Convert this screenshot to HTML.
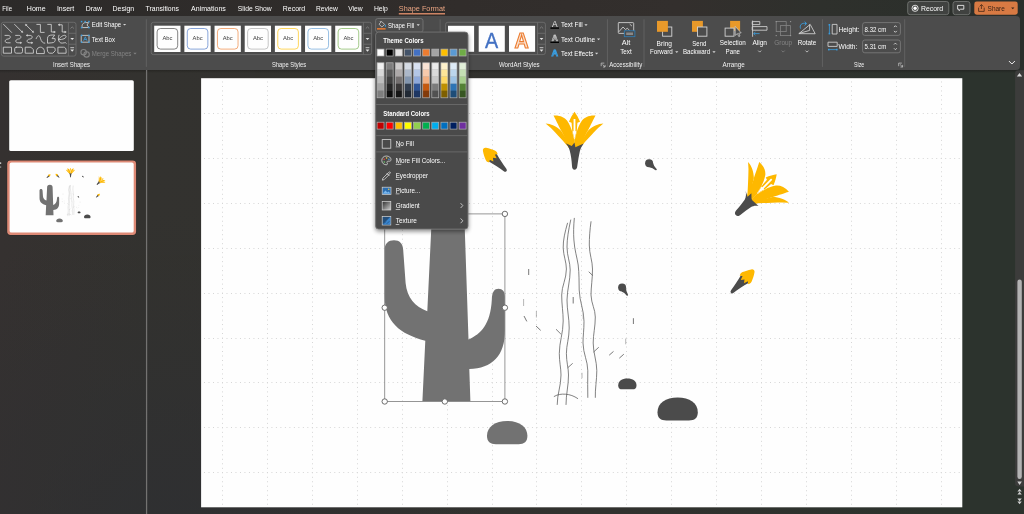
<!DOCTYPE html>
<html lang="en"><head><meta charset="utf-8"><title>PowerPoint - Shape Fill</title>
<style>html,body{margin:0;padding:0;background:#31312f;overflow:hidden}body{width:1024px;height:514px;position:relative}svg{display:block;position:absolute;left:0;top:0;font-family:"Liberation Sans", sans-serif}text{white-space:pre}svg{will-change:transform;opacity:0.999}</style></head><body>
<svg width="1024" height="514" viewBox="0 0 1024 514">
<defs>
<linearGradient id="bgTop" x1="0" y1="0" x2="1" y2="0"><stop offset="0" stop-color="#2c2a29"/><stop offset="0.45" stop-color="#322e2c"/><stop offset="0.66" stop-color="#34302e"/><stop offset="0.8" stop-color="#2f312d"/><stop offset="1" stop-color="#2b302c"/></linearGradient>
<linearGradient id="bgMain" x1="0" y1="0" x2="1" y2="0"><stop offset="0" stop-color="#363231"/><stop offset="0.14" stop-color="#34332f"/><stop offset="0.6" stop-color="#32322f"/><stop offset="0.93" stop-color="#2d342e"/><stop offset="1" stop-color="#2d342e"/></linearGradient>
<radialGradient id="bgCool" gradientUnits="userSpaceOnUse" cx="170" cy="540" r="330"><stop offset="0" stop-color="#2f3033" stop-opacity="0.9"/><stop offset="1" stop-color="#2f3033" stop-opacity="0"/></radialGradient>
<linearGradient id="ribSh" x1="0" y1="0" x2="0" y2="1"><stop offset="0" stop-color="#1c1b1a" stop-opacity="0.55"/><stop offset="1" stop-color="#1c1b1a" stop-opacity="0"/></linearGradient>
<filter id="sh" x="-20%" y="-10%" width="140%" height="125%"><feGaussianBlur in="SourceAlpha" stdDeviation="2.2"/><feOffset dx="0" dy="1.5" result="b"/><feComponentTransfer><feFuncA type="linear" slope="0.45"/></feComponentTransfer><feMerge><feMergeNode/><feMergeNode in="SourceGraphic"/></feMerge></filter>
<clipPath id="slideClip"><rect x="201.1" y="78.2" width="761.2" height="429.1"/></clipPath>
<g id="art"><path fill="#737373" d="M431.2,230 C431.2,219 436,214 448,214 C460,214 464.8,219 464.8,230 L468.5,339.5 C481,334 490.5,324 491.8,300 C492,291.5 494.5,288.8 498.5,288.8 C502.5,288.8 505,291.5 505,297 L505,330 C505,356 492,368.5 469.3,369 L470.4,401.5 L422.4,401.5 L425.3,340.8 C400,334 384.6,322 384.6,296 L384.6,250 C384.6,243.5 388.5,240.3 394,240.3 C399.5,240.3 403,243.5 403.2,250 L405.6,283 C407,298 415,306.5 427.3,311.3 Z"/>
<path fill="#737373" d="M487,435.8 C487,426.8 495.1,421 507.2,421 C519.3,421 527.4,426.8 527.4,435.8 C527.4,441.9 524.2,444.2 518.5,444.2 L495.9,444.2 C490.2,444.2 487,441.9 487,435.8 Z"/>
<path fill="#4c4c4c" d="M657.5,412.3 C657.5,403.3 665.6,397.6 677.65,397.6 C689.7,397.6 697.8,403.3 697.8,412.3 C697.8,418.2 694.6,420.5 688.9,420.5 L666.4,420.5 C660.7,420.5 657.5,418.2 657.5,412.3 Z"/>
<path fill="#4c4c4c" d="M618.2,385.4 C618.2,381.3 621.9,378.6 627.35,378.6 C632.8,378.6 636.5,381.3 636.5,385.4 C636.5,388.2 635.0,389.3 632.5,389.3 L622.2,389.3 C619.7,389.3 618.2,388.2 618.2,385.4 Z"/>
<path fill="none" stroke="#5a5a5a" stroke-width="0.75" stroke-linecap="round" d="M567.5,223.2 C565,232 563,240 563.2,248 C563.5,256 566.4,262 566.4,269 C566.4,279 561.7,286 561.7,295 C561.7,305 563.2,312 563.2,321 C563.2,333 559.3,342 559.3,353.5 C559.3,362 561,368 561,375 C561,386 557.2,394 557.2,404.5"/>
<path fill="none" stroke="#5a5a5a" stroke-width="0.75" stroke-linecap="round" d="M570.7,220 C568.5,230 567,239 567,247 C567,256 570.2,262 570.2,270 C570.2,281 567.2,289 567,300 C567,310 569.2,318 569.2,328 C569.2,338 566.4,345 566.4,353.5 C566.4,362 568.5,368 568.5,375 C568.5,386 566,394 566,404.5"/>
<path fill="none" stroke="#5a5a5a" stroke-width="0.75" stroke-linecap="round" d="M574.3,218.3 C573.6,226 573.4,233 573.9,240 C574.5,250 577,257 578.2,265 C579.2,274 579,282 579.2,290 C579.6,302 584,310 584,321.4 C584,330 583,336 583,343 C583.2,354 587.8,361 587.8,370.7 C587.8,380 587.5,389 587.8,397.4"/>
<path fill="none" stroke="#5a5a5a" stroke-width="0.75" stroke-linecap="round" d="M591,221.7 C589.8,230 589.3,238 589.3,245 C589.3,254 592.5,261 592.5,269 C592.5,279 591,287 591,295 C591.3,304 595.3,309 595.3,317 C595.3,327 593.2,334 593.2,343 C593.2,353 596.8,361 596.8,370.7 C596.8,380 595,389 595.3,397.4"/>
<path fill="none" stroke="#5a5a5a" stroke-width="0.75" stroke-linecap="round" d="M554.2,396.4 C558,394.2 561.5,394 565.3,394.2 C570,394.5 574,396 577.7,398.5"/>
<path fill="none" stroke="#5a5a5a" stroke-width="0.75" stroke-linecap="round" d="M589,272 L592.5,275.3"/>
<path fill="none" stroke="#5a5a5a" stroke-width="0.75" stroke-linecap="round" d="M568,367.5 L572.4,363.6"/>
<path fill="none" stroke="#5a5a5a" stroke-width="0.75" stroke-linecap="round" d="M593.8,351.8 L598.5,347.5"/>
<path fill="none" stroke="#5a5a5a" stroke-width="0.75" stroke-linecap="round" d="M556.3,329.5 L560.6,333.8"/>
<path fill="none" stroke="#6a6a6a" stroke-width="0.9" d="M528.7,269 L528.7,275"/>
<path fill="none" stroke="#6a6a6a" stroke-width="0.9" d="M573.2,297 L573.2,303.5"/>
<path fill="none" stroke="#6a6a6a" stroke-width="0.9" d="M633.4,318.2 L633.4,324"/>
<path fill="none" stroke="#6a6a6a" stroke-width="0.9" d="M524,316 L526.8,321.4"/>
<path fill="none" stroke="#6a6a6a" stroke-width="0.9" d="M536,326 L540.7,330.4"/>
<path fill="none" stroke="#6a6a6a" stroke-width="0.9" d="M609.2,355.2 L613.5,351.4"/>
<path fill="none" stroke="#6a6a6a" stroke-width="0.9" d="M619.3,358.2 L623.8,354.2"/>
<path fill="none" stroke="#9a9a9a" stroke-width="0.7" d="M523.6,299 L523.6,306"/>
<path fill="none" stroke="#9a9a9a" stroke-width="0.7" d="M536.4,311 L536.4,317.5"/>
<path fill="none" stroke="#9a9a9a" stroke-width="0.7" d="M625.7,338.5 L625.7,344.3"/>
<path fill="none" stroke="#9a9a9a" stroke-width="0.7" d="M582,372.8 L582,378.2"/>
<path fill="none" stroke="#9a9a9a" stroke-width="0.7" d="M583.2,313 L583.2,319"/>
<circle cx="649.1" cy="163.3" r="4.0" fill="#4c4c4c"/>
<path fill="#4c4c4c" d="M649.42,167.29 Q652.56,167.81 655.49,170.15 L656.51,169.05 Q653.91,166.34 653.10,163.26 Z"/>
<circle cx="656.0" cy="169.6" r="0.75" fill="#4c4c4c"/>
<circle cx="622.1" cy="287.5" r="4.0" fill="#4c4c4c"/>
<path fill="#4c4c4c" d="M621.53,291.46 Q624.47,292.67 626.68,295.43 L627.92,294.57 Q626.11,291.53 626.01,288.35 Z"/>
<circle cx="627.3" cy="295.0" r="0.75" fill="#4c4c4c"/>
<g transform="translate(574.5,169.5)"><path fill="#ffb900" d="M0,-57.7 C2,-55 4,-51.6 5.5,-47.7 L2.9,-46.8 L2.2,-37.5 L0,-30.5 L-2.2,-37.5 L-2.9,-46.8 L-5.5,-47.7 C-4,-51.6 -2,-55 0,-57.7 Z"/><path fill="#ffffff" d="M-0.9,-50.6 L0.9,-50.6 L0.95,-38.4 L1.9,-38 L0,-30.6 L-1.9,-38 L-0.95,-38.4 Z"/><path fill="#ffb900" d="M-28.9,-46.1 C-24,-46 -18,-43.4 -13.2,-38.6 L-8,-30 L-4,-20 C-10,-27 -18,-35.6 -23.6,-41.4 Z"/><path fill="#ffb900" d="M28.9,-46.1 C24,-46 18,-43.4 13.2,-38.6 L8,-30 L4,-20 C10,-27 18,-35.6 23.6,-41.4 Z"/><path fill="#ffb900" d="M-21,-54 C-15,-54.6 -10,-52.2 -7.5,-49.1 C-4.9,-45.4 -3.4,-41.4 -2.8,-39.6 C-1.8,-36 -1,-33 -0.5,-30.6 L0.1,-30 L0.1,-20 L-6,-22 C-9,-30 -11,-35 -13.4,-38.9 C-15.2,-42.4 -17.4,-47 -21,-54 Z"/><path fill="#ffb900" d="M21,-54 C15,-54.6 10,-52.2 7.5,-49.1 C4.9,-45.4 3.4,-41.4 2.8,-39.6 C1.8,-36 1,-33 0.5,-30.6 L-0.1,-30 L-0.1,-20 L6,-22 C9,-30 11,-35 13.4,-38.9 C15.2,-42.4 17.4,-47 21,-54 Z"/><path fill="#4c4c4c" d="M-8.7,-26.2 L-2.8,-23.6 L0,-27 L0.9,-22.2 L9.2,-26.1 C7,-23 6,-21 5.4,-18.5 C4.4,-14 3.6,-9 2.8,-3.6 C2.6,-1 1.5,0.15 0,0.15 C-1.5,0.15 -2.4,-1 -2.5,-3.6 C-2.8,-9 -3.6,-14.5 -4.8,-19 C-5.6,-22 -7,-24.4 -8.7,-26.2 Z"/></g>
<g transform="translate(735.9,215.0) rotate(45)"><path fill="#ffb900" d="M0,-57.7 C2,-55 4,-51.6 5.5,-47.7 L2.9,-46.8 L2.2,-37.5 L0,-30.5 L-2.2,-37.5 L-2.9,-46.8 L-5.5,-47.7 C-4,-51.6 -2,-55 0,-57.7 Z"/><path fill="#ffffff" d="M-0.9,-50.6 L0.9,-50.6 L0.95,-38.4 L1.9,-38 L0,-30.6 L-1.9,-38 L-0.95,-38.4 Z"/><path fill="#ffb900" d="M-28.9,-46.1 C-24,-46 -18,-43.4 -13.2,-38.6 L-8,-30 L-4,-20 C-10,-27 -18,-35.6 -23.6,-41.4 Z"/><path fill="#ffb900" d="M28.9,-46.1 C24,-46 18,-43.4 13.2,-38.6 L8,-30 L4,-20 C10,-27 18,-35.6 23.6,-41.4 Z"/><path fill="#ffb900" d="M-21,-54 C-15,-54.6 -10,-52.2 -7.5,-49.1 C-4.9,-45.4 -3.4,-41.4 -2.8,-39.6 C-1.8,-36 -1,-33 -0.5,-30.6 L0.1,-30 L0.1,-20 L-6,-22 C-9,-30 -11,-35 -13.4,-38.9 C-15.2,-42.4 -17.4,-47 -21,-54 Z"/><path fill="#ffb900" d="M21,-54 C15,-54.6 10,-52.2 7.5,-49.1 C4.9,-45.4 3.4,-41.4 2.8,-39.6 C1.8,-36 1,-33 0.5,-30.6 L-0.1,-30 L-0.1,-20 L6,-22 C9,-30 11,-35 13.4,-38.9 C15.2,-42.4 17.4,-47 21,-54 Z"/><path fill="#4c4c4c" d="M-10.2,-23.9 L-4.6,-21.2 L-4.5,-26.4 L-0.5,-22.6 L1.1,-22 L9.7,-22.3 C7,-20.5 5.8,-18.5 5,-16 C4.2,-12 3.6,-8 3.1,-3.6 C3,-1 1.6,0.15 0,0.15 C-1.6,0.15 -3,-1 -3.1,-3.6 C-3.3,-8 -3.8,-13 -4.6,-17 C-5.6,-20 -7.5,-22.3 -10.2,-23.9 Z"/></g>
<g transform="translate(506.2,171.1) rotate(-45)"><path fill="#4c4c4c" d="M-5.4,-19 L0,-22 L5.4,-19 C3.7,-13 2.5,-7 1.8,-1.6 Q1.5,0.3 0,0.3 Q-1.5,0.3 -1.8,-1.6 C-2.5,-7 -3.8,-13 -5.6,-20 Z"/><path fill="#ffb900" d="M0,-32 C0.9,-32 1.6,-31.6 2.2,-30.7 C4,-28 5.6,-25 6.5,-22.6 C7,-21.4 7,-20.4 6.6,-19.4 L6.0,-18.0 L3.7,-19.8 L2.3,-15.8 L0,-18.8 L-2.3,-15.8 L-3.7,-19.8 L-6.0,-18.0 L-6.6,-19.4 C-7,-20.4 -7,-21.4 -6.5,-22.6 C-5.6,-25 -4,-28 -2.2,-30.7 C-1.6,-31.6 -0.9,-32 0,-32 Z"/></g>
<g transform="translate(731.2,292.7) rotate(45)"><path fill="#4c4c4c" d="M-5.4,-19 L0,-22 L5.4,-19 C3.7,-13 2.5,-7 1.8,-1.6 Q1.5,0.3 0,0.3 Q-1.5,0.3 -1.8,-1.6 C-2.5,-7 -3.8,-13 -5.6,-20 Z"/><path fill="#ffb900" d="M0,-32 C0.9,-32 1.6,-31.6 2.2,-30.7 C4,-28 5.6,-25 6.5,-22.6 C7,-21.4 7,-20.4 6.6,-19.4 L6.0,-18.0 L3.7,-19.8 L2.3,-15.8 L0,-18.8 L-2.3,-15.8 L-3.7,-19.8 L-6.0,-18.0 L-6.6,-19.4 C-7,-20.4 -7,-21.4 -6.5,-22.6 C-5.6,-25 -4,-28 -2.2,-30.7 C-1.6,-31.6 -0.9,-32 0,-32 Z"/></g>
<g transform="translate(428.5,173) rotate(45)"><path fill="#4c4c4c" d="M-5.4,-19 L0,-22 L5.4,-19 C3.7,-13 2.5,-7 1.8,-1.6 Q1.5,0.3 0,0.3 Q-1.5,0.3 -1.8,-1.6 C-2.5,-7 -3.8,-13 -5.6,-20 Z"/><path fill="#ffb900" d="M0,-32 C0.9,-32 1.6,-31.6 2.2,-30.7 C4,-28 5.6,-25 6.5,-22.6 C7,-21.4 7,-20.4 6.6,-19.4 L6.0,-18.0 L3.7,-19.8 L2.3,-15.8 L0,-18.8 L-2.3,-15.8 L-3.7,-19.8 L-6.0,-18.0 L-6.6,-19.4 C-7,-20.4 -7,-21.4 -6.5,-22.6 C-5.6,-25 -4,-28 -2.2,-30.7 C-1.6,-31.6 -0.9,-32 0,-32 Z"/></g></g>
</defs>
<rect x="0" y="0" width="1024" height="514" fill="url(#bgMain)"/>
<rect x="0" y="0" width="1024" height="514" fill="url(#bgCool)"/>
<rect x="0" y="0" width="1024" height="70" fill="url(#bgTop)"/>
<rect x="0" y="69.9" width="1020" height="3.2" fill="url(#ribSh)"/>
<g id="tabs">
<text x="2.30" y="10.92" font-size="7.6" fill="#ffffff" textLength="9.80" lengthAdjust="spacingAndGlyphs">File</text>
<text x="26.80" y="10.92" font-size="7.6" fill="#ffffff" textLength="18.80" lengthAdjust="spacingAndGlyphs">Home</text>
<text x="56.90" y="10.92" font-size="7.6" fill="#ffffff" textLength="17.40" lengthAdjust="spacingAndGlyphs">Insert</text>
<text x="85.70" y="10.92" font-size="7.6" fill="#ffffff" textLength="16.30" lengthAdjust="spacingAndGlyphs">Draw</text>
<text x="112.50" y="10.92" font-size="7.6" fill="#ffffff" textLength="21.70" lengthAdjust="spacingAndGlyphs">Design</text>
<text x="145.60" y="10.92" font-size="7.6" fill="#ffffff" textLength="33.30" lengthAdjust="spacingAndGlyphs">Transitions</text>
<text x="191.10" y="10.92" font-size="7.6" fill="#ffffff" textLength="34.70" lengthAdjust="spacingAndGlyphs">Animations</text>
<text x="237.80" y="10.92" font-size="7.6" fill="#ffffff" textLength="33.80" lengthAdjust="spacingAndGlyphs">Slide Show</text>
<text x="282.80" y="10.92" font-size="7.6" fill="#ffffff" textLength="22.40" lengthAdjust="spacingAndGlyphs">Record</text>
<text x="316.00" y="10.92" font-size="7.6" fill="#ffffff" textLength="21.80" lengthAdjust="spacingAndGlyphs">Review</text>
<text x="348.20" y="10.92" font-size="7.6" fill="#ffffff" textLength="14.50" lengthAdjust="spacingAndGlyphs">View</text>
<text x="373.90" y="10.92" font-size="7.6" fill="#ffffff" textLength="14.00" lengthAdjust="spacingAndGlyphs">Help</text>
<text x="398.80" y="10.92" font-size="7.6" fill="#eaa583" textLength="46.20" lengthAdjust="spacingAndGlyphs">Shape Format</text>
<rect x="398.8" y="13.0" width="46.2" height="1.5" fill="#cf8565"/>
<rect x="907.7" y="1.5" width="41.1" height="13.2" rx="2.4" fill="#414341" stroke="#7b7d7b" stroke-width="0.8"/>
<circle cx="915.1" cy="8.3" r="3.1" fill="none" stroke="#ffffff" stroke-width="0.8"/><circle cx="915.1" cy="8.3" r="1.7" fill="#ffffff"/>
<text x="921.00" y="11.02" font-size="7.6" fill="#ffffff" textLength="22.20" lengthAdjust="spacingAndGlyphs">Record</text>
<rect x="953.0" y="1.5" width="17.0" height="13.2" rx="2.4" fill="#414341" stroke="#7b7d7b" stroke-width="0.8"/>
<path d="M957.6,5.4 H963.8 V9.2 H960.6 L959.0,10.7 V9.2 H957.6 Z" fill="none" stroke="#ffffff" stroke-width="0.8" stroke-linejoin="round"/>
<rect x="974.3" y="1.5" width="43.4" height="13.2" rx="2.4" fill="#d97b44"/>
<path d="M978.6,7.6 V11.4 H984.2 V7.6 M979.6,6.4 L981.4,4.6 L983.4,6.4 M981.4,4.8 V9" fill="none" stroke="#4a2a18" stroke-width="0.8" stroke-linejoin="round"/>
<text x="987.60" y="11.02" font-size="7.6" fill="#3b2417" textLength="17.20" lengthAdjust="spacingAndGlyphs">Share</text>
<path d="M1011.2,7.6 L1012.8,9.3 L1014.4,7.6 Z" fill="#3b2417"/>
</g>
<g id="ribbon">
<path d="M0,16.1 H1016 Q1020,16.1 1020,20.1 V65.9 Q1020,69.9 1016,69.9 H0 Z" fill="#4d4d4d"/>
<rect x="145.85" y="19.3" width="0.9" height="47.6" fill="#646464"/>
<rect x="439.65" y="19.3" width="0.9" height="47.6" fill="#646464"/>
<rect x="606.95" y="19.3" width="0.9" height="47.6" fill="#646464"/>
<rect x="643.55" y="19.3" width="0.9" height="47.6" fill="#646464"/>
<rect x="821.95" y="19.3" width="0.9" height="47.6" fill="#646464"/>
<rect x="904.25" y="19.3" width="0.9" height="47.6" fill="#646464"/>
<text x="53.00" y="67.28" font-size="7.2" fill="#f2f2f2" textLength="37.00" lengthAdjust="spacingAndGlyphs">Insert Shapes</text>
<text x="271.90" y="67.28" font-size="7.2" fill="#f2f2f2" textLength="34.30" lengthAdjust="spacingAndGlyphs">Shape Styles</text>
<text x="498.90" y="67.28" font-size="7.2" fill="#f2f2f2" textLength="40.80" lengthAdjust="spacingAndGlyphs">WordArt Styles</text>
<text x="609.30" y="67.28" font-size="7.2" fill="#f2f2f2" textLength="32.90" lengthAdjust="spacingAndGlyphs">Accessibility</text>
<text x="722.50" y="67.28" font-size="7.2" fill="#f2f2f2" textLength="22.30" lengthAdjust="spacingAndGlyphs">Arrange</text>
<text x="854.00" y="67.28" font-size="7.2" fill="#f2f2f2" textLength="10.30" lengthAdjust="spacingAndGlyphs">Size</text>
<path d="M601.2,66.2 V63.1 H604.3000000000001" stroke="#c8c8c8" stroke-width="0.75" fill="none"/><path d="M602.6,64.5 L605.0,66.9 M605.1,64.9 V67.0 H603.0" stroke="#c8c8c8" stroke-width="0.75" fill="none"/>
<path d="M898.7,66.2 V63.1 H901.8000000000001" stroke="#c8c8c8" stroke-width="0.75" fill="none"/><path d="M900.1,64.5 L902.5,66.9 M902.6,64.9 V67.0 H900.5" stroke="#c8c8c8" stroke-width="0.75" fill="none"/>
<path d="M1009.2,61.3 L1011.9,64.0 L1014.6,61.3" fill="none" stroke="#f0f0f0" stroke-width="1.0" stroke-linecap="round" stroke-linejoin="round"/>
<g id="insert-shapes">
<rect x="1.3" y="22.3" width="74.7" height="33.8" rx="2.2" fill="none" stroke="#6e6e6e" stroke-width="0.9"/>
<path d="M68.4,22.3 V56.1 M68.4,33.3 H76.0 M68.4,44.2 H76.0" stroke="#6e6e6e" stroke-width="0.9" fill="none"/>
<path d="M70.5,28.5 L72.2,26.9 L73.9,28.5" stroke="#8a8a8a" stroke-width="0.8" fill="none"/>
<path d="M70.3,37.9 L72.2,40.1 L74.1,37.9 Z" fill="#e4e4e4"/>
<path d="M70.3,47.7 H74.1" stroke="#e4e4e4" stroke-width="0.8"/>
<path d="M70.3,49.5 L72.2,51.7 L74.1,49.5 Z" fill="#e4e4e4"/>
<path fill="none" stroke="#d4d4d4" stroke-width="0.85" stroke-linecap="round" stroke-linejoin="round" d="M3.5999999999999996,24.4 L11.6,32.4"/>
<path fill="none" stroke="#d4d4d4" stroke-width="0.85" stroke-linecap="round" stroke-linejoin="round" d="M14.600000000000001,24.4 L22.200000000000003,32.0"/><path d="M20.96,32.11 L22.80,32.60 L22.31,30.76 Z" fill="#d4d4d4" stroke="#d4d4d4" stroke-width="0.4" stroke-linejoin="round"/>
<path fill="none" stroke="#d4d4d4" stroke-width="0.85" stroke-linecap="round" stroke-linejoin="round" d="M26.1,25.0 L32.9,31.799999999999997"/><path d="M31.86,32.11 L33.70,32.60 L33.21,30.76 Z" fill="#d4d4d4" stroke="#d4d4d4" stroke-width="0.4" stroke-linejoin="round"/><path d="M27.14,24.69 L25.30,24.20 L25.79,26.04 Z" fill="#d4d4d4" stroke="#d4d4d4" stroke-width="0.4" stroke-linejoin="round"/>
<path fill="none" stroke="#d4d4d4" stroke-width="0.85" stroke-linecap="round" stroke-linejoin="round" d="M36.8,24.4 H40.4 V32.4 H44.199999999999996"/>
<path fill="none" stroke="#d4d4d4" stroke-width="0.85" stroke-linecap="round" stroke-linejoin="round" d="M47.699999999999996,24.4 H51.3 V32.0 H54.3"/><path d="M53.85,32.95 L55.50,32.00 L53.85,31.05 Z" fill="#d4d4d4" stroke="#d4d4d4" stroke-width="0.4" stroke-linejoin="round"/>
<path fill="none" stroke="#d4d4d4" stroke-width="0.85" stroke-linecap="round" stroke-linejoin="round" d="M59.2,24.799999999999997 H62.2 V32.0 H65.2"/><path d="M64.75,32.95 L66.40,32.00 L64.75,31.05 Z" fill="#d4d4d4" stroke="#d4d4d4" stroke-width="0.4" stroke-linejoin="round"/><path d="M59.65,23.85 L58.00,24.80 L59.65,25.75 Z" fill="#d4d4d4" stroke="#d4d4d4" stroke-width="0.4" stroke-linejoin="round"/>
<path fill="none" stroke="#d4d4d4" stroke-width="0.85" stroke-linecap="round" stroke-linejoin="round" d="M5.0,35.400000000000006 H8.2 C11.0,35.400000000000006 11.0,38.800000000000004 8.0,39.0 C4.3999999999999995,39.2 4.3999999999999995,42.800000000000004 7.199999999999999,42.800000000000004 H10.2 "/>
<path fill="none" stroke="#d4d4d4" stroke-width="0.85" stroke-linecap="round" stroke-linejoin="round" d="M15.600000000000003,35.400000000000006 H18.800000000000004 C21.6,35.400000000000006 21.6,38.800000000000004 18.6,39.0 C15.000000000000004,39.2 15.000000000000004,42.800000000000004 17.800000000000004,42.800000000000004 H20.800000000000004"/><path d="M20.33,43.65 L21.80,42.80 L20.33,41.95 Z" fill="#d4d4d4" stroke="#d4d4d4" stroke-width="0.4" stroke-linejoin="round"/>
<path fill="none" stroke="#d4d4d4" stroke-width="0.85" stroke-linecap="round" stroke-linejoin="round" d="M26.9,35.400000000000006 H30.1 C32.9,35.400000000000006 32.9,38.800000000000004 29.9,39.0 C26.3,39.2 26.3,42.800000000000004 29.1,42.800000000000004 H32.1"/><path d="M31.43,43.65 L32.90,42.80 L31.43,41.95 Z" fill="#d4d4d4" stroke="#d4d4d4" stroke-width="0.4" stroke-linejoin="round"/><path d="M27.57,34.55 L26.10,35.40 L27.57,36.25 Z" fill="#d4d4d4" stroke="#d4d4d4" stroke-width="0.4" stroke-linejoin="round"/>
<path fill="none" stroke="#d4d4d4" stroke-width="0.85" stroke-linecap="round" stroke-linejoin="round" d="M36.199999999999996,38.6 C37.8,34.6 39.6,34.800000000000004 40.4,38.2 C41.4,41.800000000000004 42.8,43.2 44.8,43.2"/>
<path fill="none" stroke="#d4d4d4" stroke-width="0.85" stroke-linecap="round" stroke-linejoin="round" d="M47.5,42.800000000000004 V38.2 C47.5,35.6 49.699999999999996,35.0 52.9,35.0 H54.699999999999996 L52.099999999999994,38.6 H55.099999999999994 C55.699999999999996,41.0 54.5,42.800000000000004 52.3,42.800000000000004 Z"/>
<path fill="none" stroke="#d4d4d4" stroke-width="0.85" stroke-linecap="round" stroke-linejoin="round" d="M59.0,35.2 C57.6,38.6 58.6,42.2 61.0,43.0 C63.2,43.6 65.8,41.6 66.4,43.2 M58.6,39.6 C61.2,35.6 65.2,34.2 66.0,36.2 C66.60000000000001,38.2 62.800000000000004,39.800000000000004 58.6,39.6"/>
<rect fill="none" stroke="#d4d4d4" stroke-width="0.85" stroke-linecap="round" stroke-linejoin="round" x="3.6999999999999997" y="47.2" width="7.8" height="6.0"/>
<rect fill="none" stroke="#d4d4d4" stroke-width="0.85" stroke-linecap="round" stroke-linejoin="round" x="14.700000000000001" y="47.2" width="7.8" height="6.0" rx="1.6"/>
<path fill="none" stroke="#d4d4d4" stroke-width="0.85" stroke-linecap="round" stroke-linejoin="round" d="M25.6,47.2 H30.9 L33.4,49.7 V53.2 H25.6 Z"/>
<path fill="none" stroke="#d4d4d4" stroke-width="0.85" stroke-linecap="round" stroke-linejoin="round" d="M36.5,53.2 V50.6 C37.199999999999996,48.2 38.6,47.2 40.4,47.2 C42.199999999999996,47.2 43.6,48.2 44.3,50.6 V53.2 Z"/>
<path fill="none" stroke="#d4d4d4" stroke-width="0.85" stroke-linecap="round" stroke-linejoin="round" d="M47.4,47.2 H53.099999999999994 C54.5,47.2 55.199999999999996,48.400000000000006 55.199999999999996,49.400000000000006 V50.800000000000004 L52.8,53.2 H49.8 C48.3,53.2 47.4,51.7 47.4,50.2 Z"/>
<path fill="none" stroke="#d4d4d4" stroke-width="0.85" stroke-linecap="round" stroke-linejoin="round" d="M58.300000000000004,47.2 H63.5 C65.2,47.2 66.10000000000001,48.5 66.10000000000001,50.2 V53.2 H58.300000000000004 Z"/>
</g>
<g id="edit-shape">
<path fill="none" stroke="#d4d4d4" stroke-width="0.85" stroke-linecap="round" stroke-linejoin="round" d="M82.2,27.2 C81.4,24.6 83.4,22.6 85.6,22.6 L88.6,22.6 L87,25 L88.8,27.2 Z"/>
<rect x="80.85" y="20.85" width="1.5" height="1.5" fill="#3c9fe0"/><rect x="88.15" y="20.85" width="1.5" height="1.5" fill="#3c9fe0"/><rect x="80.85" y="26.85" width="1.5" height="1.5" fill="#3c9fe0"/><rect x="88.15" y="26.85" width="1.5" height="1.5" fill="#3c9fe0"/><rect x="84.45" y="20.85" width="1.5" height="1.5" fill="#3c9fe0"/>
<text x="91.80" y="27.25" font-size="7.4" fill="#ffffff" textLength="29.40" lengthAdjust="spacingAndGlyphs">Edit Shape</text>
<path d="M123.0,23.9 L124.6,25.6 L126.2,23.9 Z" fill="#d8d8d8"/>
<rect fill="none" stroke="#d4d4d4" stroke-width="0.85" stroke-linecap="round" stroke-linejoin="round" x="81.6" y="35.4" width="7.4" height="6.8"/>
<rect x="80.85" y="34.65" width="1.5" height="1.5" fill="#3c9fe0"/><rect x="88.25" y="34.65" width="1.5" height="1.5" fill="#3c9fe0"/><rect x="80.85" y="41.45" width="1.5" height="1.5" fill="#3c9fe0"/><rect x="88.25" y="41.45" width="1.5" height="1.5" fill="#3c9fe0"/>
<path d="M83.6,40.8 L85.3,36.8 L87,40.8 M84.3,39.5 H86.3" stroke="#3c9fe0" stroke-width="0.8" fill="none"/>
<text x="91.80" y="41.85" font-size="7.4" fill="#ffffff" textLength="23.20" lengthAdjust="spacingAndGlyphs">Text Box</text>
<circle cx="83.6" cy="52.2" r="2.7" fill="none" stroke="#858585" stroke-width="1.1"/><circle cx="86.6" cy="54.4" r="2.7" fill="none" stroke="#858585" stroke-width="1.1"/>
<text x="91.80" y="56.05" font-size="7.4" fill="#858585" textLength="39.60" lengthAdjust="spacingAndGlyphs">Merge Shapes</text>
<path d="M133.4,52.7 L135.0,54.4 L136.6,52.7 Z" fill="#858585"/>
</g>
<g id="shape-styles">
<rect x="151.2" y="22.3" width="220.4" height="32.3" rx="2.2" fill="none" stroke="#6e6e6e" stroke-width="0.9"/>
<path d="M363.4,22.3 V54.6 M363.4,33.3 H371.6 M363.4,44.2 H371.6" stroke="#6e6e6e" stroke-width="0.9" fill="none"/>
<path d="M365.8,28.5 L367.5,26.9 L369.2,28.5" stroke="#8a8a8a" stroke-width="0.8" fill="none"/>
<path d="M365.6,37.9 L367.5,40.1 L369.4,37.9 Z" fill="#e4e4e4"/>
<path d="M365.6,47.7 H369.4" stroke="#e4e4e4" stroke-width="0.8"/>
<path d="M365.6,49.5 L367.5,51.7 L369.4,49.5 Z" fill="#e4e4e4"/>
<rect x="154.20" y="25.7" width="26.3" height="26.3" fill="#ffffff"/>
<rect x="157.10" y="28.5" width="20.6" height="20.6" rx="3.4" fill="#ffffff" stroke="#3f3f3f" stroke-width="0.75" stroke-opacity="0.85"/>
<text x="167.40" y="39.58" font-size="5.8" fill="#3c3c3c" text-anchor="middle" textLength="10.00" lengthAdjust="spacingAndGlyphs">Abc</text>
<rect x="184.37" y="25.7" width="26.3" height="26.3" fill="#ffffff"/>
<rect x="187.27" y="28.5" width="20.6" height="20.6" rx="3.4" fill="#ffffff" stroke="#4472c4" stroke-width="0.75" stroke-opacity="0.85"/>
<text x="197.57" y="39.58" font-size="5.8" fill="#3c3c3c" text-anchor="middle" textLength="10.00" lengthAdjust="spacingAndGlyphs">Abc</text>
<rect x="214.54" y="25.7" width="26.3" height="26.3" fill="#ffffff"/>
<rect x="217.44" y="28.5" width="20.6" height="20.6" rx="3.4" fill="#ffffff" stroke="#ed7d31" stroke-width="0.75" stroke-opacity="0.85"/>
<text x="227.74" y="39.58" font-size="5.8" fill="#3c3c3c" text-anchor="middle" textLength="10.00" lengthAdjust="spacingAndGlyphs">Abc</text>
<rect x="244.71" y="25.7" width="26.3" height="26.3" fill="#ffffff"/>
<rect x="247.61" y="28.5" width="20.6" height="20.6" rx="3.4" fill="#ffffff" stroke="#a5a5a5" stroke-width="0.75" stroke-opacity="0.85"/>
<text x="257.91" y="39.58" font-size="5.8" fill="#3c3c3c" text-anchor="middle" textLength="10.00" lengthAdjust="spacingAndGlyphs">Abc</text>
<rect x="274.88" y="25.7" width="26.3" height="26.3" fill="#ffffff"/>
<rect x="277.78" y="28.5" width="20.6" height="20.6" rx="3.4" fill="#ffffff" stroke="#ffc000" stroke-width="0.75" stroke-opacity="0.85"/>
<text x="288.08" y="39.58" font-size="5.8" fill="#3c3c3c" text-anchor="middle" textLength="10.00" lengthAdjust="spacingAndGlyphs">Abc</text>
<rect x="305.05" y="25.7" width="26.3" height="26.3" fill="#ffffff"/>
<rect x="307.95" y="28.5" width="20.6" height="20.6" rx="3.4" fill="#ffffff" stroke="#5b9bd5" stroke-width="0.75" stroke-opacity="0.85"/>
<text x="318.25" y="39.58" font-size="5.8" fill="#3c3c3c" text-anchor="middle" textLength="10.00" lengthAdjust="spacingAndGlyphs">Abc</text>
<rect x="335.22" y="25.7" width="26.3" height="26.3" fill="#ffffff"/>
<rect x="338.12" y="28.5" width="20.6" height="20.6" rx="3.4" fill="#ffffff" stroke="#70ad47" stroke-width="0.75" stroke-opacity="0.85"/>
<text x="348.42" y="39.58" font-size="5.8" fill="#3c3c3c" text-anchor="middle" textLength="10.00" lengthAdjust="spacingAndGlyphs">Abc</text>
</g>
<g id="shape-fill">
<rect x="375.6" y="18.5" width="47.4" height="13.6" rx="2.2" fill="#505050" stroke="#7a7a7a" stroke-width="0.8"/>
<path fill="none" stroke="#d4d4d4" stroke-width="0.75" stroke-linejoin="round" d="M379.0,24.2 L381.6,21.4 L384.6,24.4 L381.9,27.0 Z M380.9,22.2 L379.9,21.0"/>
<path d="M385.3,24.6 C386.2,25.8 386.3,26.6 385.4,27.0 C384.6,26.6 384.6,25.8 385.3,24.6 Z" fill="#3c9fe0"/>
<rect x="377.0" y="28.1" width="8.6" height="1.5" fill="#ed7d31"/>
<text x="387.90" y="27.65" font-size="7.4" fill="#ffffff" textLength="26.40" lengthAdjust="spacingAndGlyphs">Shape Fill</text>
<path d="M416.6,24.3 L418.2,26.0 L419.8,24.3 Z" fill="#d8d8d8"/>
</g>
<g id="wordart">
<rect x="445.6" y="22.3" width="99.8" height="32.3" rx="2.2" fill="none" stroke="#6e6e6e" stroke-width="0.9"/>
<path d="M537.6,22.3 V54.6 M537.6,33.3 H545.4 M537.6,44.2 H545.4" stroke="#6e6e6e" stroke-width="0.9" fill="none"/>
<path d="M539.8,28.5 L541.5,26.9 L543.2,28.5" stroke="#8a8a8a" stroke-width="0.8" fill="none"/>
<path d="M539.6,37.9 L541.5,40.1 L543.4,37.9 Z" fill="#e4e4e4"/>
<path d="M539.6,47.7 H543.4" stroke="#e4e4e4" stroke-width="0.8"/>
<path d="M539.6,49.5 L541.5,51.7 L543.4,49.5 Z" fill="#e4e4e4"/>
<rect x="448.0" y="25.8" width="26.1" height="26.0" fill="#ffffff"/>
<rect x="478.7" y="25.8" width="26.1" height="26.0" fill="#ffffff"/>
<rect x="509.0" y="25.8" width="26.1" height="26.0" fill="#ffffff"/>
<text x="491.7" y="47.8" font-size="21.2" fill="#4472c4" stroke="#4472c4" stroke-width="0.35" text-anchor="middle" textLength="13.2" lengthAdjust="spacingAndGlyphs">A</text>
<text x="521.6" y="47.9" font-size="21.6" fill="#fbe0cc" stroke="#ed7d31" stroke-width="1.15" text-anchor="middle" font-weight="bold" textLength="14.2" lengthAdjust="spacingAndGlyphs">A</text>
<text x="461" y="47.8" font-size="21.2" fill="#262626" text-anchor="middle" textLength="13.2" lengthAdjust="spacingAndGlyphs">A</text>
<text x="554.7" y="27.2" font-size="8.4" fill="#e8e8e8" text-anchor="middle">A</text>
<rect x="550.4" y="27.4" width="8.6" height="1.4" fill="#000000"/>
<text x="561.00" y="27.25" font-size="7.4" fill="#ffffff" textLength="21.80" lengthAdjust="spacingAndGlyphs">Text Fill</text>
<path d="M584.4,24.2 L586.0,25.9 L587.6,24.2 Z" fill="#d8d8d8"/>
<text x="554.7" y="41.4" font-size="8.4" fill="none" stroke="#e8e8e8" stroke-width="0.5" text-anchor="middle" font-weight="bold">A</text>
<rect x="550.4" y="41.6" width="8.6" height="1.4" fill="#000000"/>
<text x="561.00" y="41.95" font-size="7.4" fill="#ffffff" textLength="34.20" lengthAdjust="spacingAndGlyphs">Text Outline</text>
<path d="M597.0,38.6 L598.6,40.3 L600.2,38.6 Z" fill="#d8d8d8"/>
<text x="554.7" y="56.3" font-size="9.0" fill="#3a4a58" stroke="#3c9fe0" stroke-width="0.85" text-anchor="middle" font-weight="bold">A</text>
<text x="561.00" y="56.05" font-size="7.4" fill="#ffffff" textLength="32.40" lengthAdjust="spacingAndGlyphs">Text Effects</text>
<path d="M595.0,52.7 L596.6,54.4 L598.2,52.7 Z" fill="#d8d8d8"/>
</g>
<g id="alt-text">
<rect fill="none" stroke="#d4d4d4" stroke-width="0.85" stroke-linecap="round" stroke-linejoin="round" x="618.3" y="22.6" width="15.4" height="10.8" rx="0.8"/>
<path fill="none" stroke="#d4d4d4" stroke-width="0.85" stroke-linecap="round" stroke-linejoin="round" d="M619,31.6 L623,27 L625.6,29.6 L627.2,28.2 L629.2,30"/><path fill="none" stroke="#d4d4d4" stroke-width="0.85" stroke-linecap="round" stroke-linejoin="round" d="M630,24.4 L631.6,25.8"/>
<rect x="624.3" y="30.8" width="10.6" height="5.9" fill="#4d4d4d" stroke="#2f7fb8" stroke-width="0.8"/><rect x="626.2" y="32.5" width="6.8" height="2.5" fill="#8a8a8a"/>
<text x="626.00" y="45.25" font-size="7.4" fill="#ffffff" text-anchor="middle" textLength="8.60" lengthAdjust="spacingAndGlyphs">Alt</text>
<text x="626.00" y="54.25" font-size="7.4" fill="#ffffff" text-anchor="middle" textLength="11.60" lengthAdjust="spacingAndGlyphs">Text</text>
</g>
<g id="arrange">
<rect x="662.6" y="27.0" width="9.2" height="9.2" fill="none" stroke="#d4d4d4" stroke-width="0.9"/><rect x="657.0" y="20.9" width="10.9" height="10.9" fill="#e99a2b"/>
<text x="664.30" y="45.95" font-size="7.4" fill="#ffffff" text-anchor="middle" textLength="15.40" lengthAdjust="spacingAndGlyphs">Bring</text>
<text x="650.00" y="54.25" font-size="7.4" fill="#ffffff" textLength="22.80" lengthAdjust="spacingAndGlyphs">Forward</text>
<path d="M675.2,51.3 L676.8,53.0 L678.4,51.3 Z" fill="#d8d8d8"/>
<rect x="692.0" y="20.9" width="10.9" height="10.9" fill="#e99a2b"/><rect x="697.5" y="27.0" width="9.4" height="9.2" fill="#4d4d4d" stroke="#d4d4d4" stroke-width="0.9"/>
<text x="699.30" y="45.95" font-size="7.4" fill="#ffffff" text-anchor="middle" textLength="14.00" lengthAdjust="spacingAndGlyphs">Send</text>
<text x="682.90" y="54.25" font-size="7.4" fill="#ffffff" textLength="27.20" lengthAdjust="spacingAndGlyphs">Backward</text>
<path d="M712.4,51.3 L714.0,53.0 L715.6,51.3 Z" fill="#d8d8d8"/>
<rect x="730.1" y="20.9" width="10.0" height="9.9" fill="#e99a2b"/><rect x="725.1" y="28.1" width="8.9" height="8.1" fill="#4d4d4d" stroke="#d4d4d4" stroke-width="0.9"/>
<path d="M735.2,26.4 L735.2,35.4 L737.4,33.6 L738.8,36.6 L740.0,36.0 L738.7,33.2 L741.2,32.9 Z" fill="#4d4d4d" stroke="#d4d4d4" stroke-width="0.7" stroke-linejoin="round"/>
<text x="732.80" y="45.35" font-size="7.4" fill="#ffffff" text-anchor="middle" textLength="25.90" lengthAdjust="spacingAndGlyphs">Selection</text>
<text x="732.80" y="54.15" font-size="7.4" fill="#ffffff" text-anchor="middle" textLength="14.40" lengthAdjust="spacingAndGlyphs">Pane</text>
<path fill="none" stroke="#d4d4d4" stroke-width="0.85" stroke-linecap="round" stroke-linejoin="round" d="M752.6,21 V36.4"/><rect fill="none" stroke="#d4d4d4" stroke-width="0.85" stroke-linecap="round" stroke-linejoin="round" x="752.6" y="21.6" width="7.2" height="3.0"/><rect fill="none" stroke="#d4d4d4" stroke-width="0.85" stroke-linecap="round" stroke-linejoin="round" x="752.6" y="26.6" width="14.4" height="3.6"/>
<path d="M759.6,33.6 H753.8 M755.4,32 L753.6,33.6 L755.4,35.2" fill="none" stroke="#3c9fe0" stroke-width="0.8"/>
<text x="759.70" y="45.45" font-size="7.4" fill="#ffffff" text-anchor="middle" textLength="14.60" lengthAdjust="spacingAndGlyphs">Align</text>
<path d="M758.2,50.6 L759.7,52.1 L761.2,50.6" fill="none" stroke="#d8d8d8" stroke-width="0.8"/>
<rect x="776.2" y="21.6" width="10.0" height="10.0" fill="none" stroke="#858585" stroke-width="0.8"/><rect x="780.6" y="25.6" width="10.0" height="10.0" fill="none" stroke="#858585" stroke-width="0.8"/>
<rect x="775.65" y="35.05" width="1.1" height="1.1" fill="#9a9a9a"/><rect x="790.05" y="21.05" width="1.1" height="1.1" fill="#9a9a9a"/><rect x="790.05" y="35.05" width="1.1" height="1.1" fill="#9a9a9a"/><rect x="775.65" y="21.05" width="1.1" height="1.1" fill="#9a9a9a"/>
<text x="783.20" y="45.45" font-size="7.4" fill="#858585" text-anchor="middle" textLength="18.00" lengthAdjust="spacingAndGlyphs">Group</text>
<path d="M781.7,50.6 L783.2,52.1 L784.7,50.6" fill="none" stroke="#858585" stroke-width="0.8"/>
<path fill="none" stroke="#d4d4d4" stroke-width="0.85" stroke-linecap="round" stroke-linejoin="round" d="M799.2,33.4 L810.2,24.4 L815.0,33.4 Z M799.2,33.4 L809.6,30.4 V24.8"/>
<path d="M800.6,28.6 C799.2,25 802,22.4 806,23.6 M804.8,21.6 L806.6,23.6 L804.6,25.4" fill="none" stroke="#3c9fe0" stroke-width="0.9"/>
<text x="807.00" y="45.45" font-size="7.4" fill="#ffffff" text-anchor="middle" textLength="18.60" lengthAdjust="spacingAndGlyphs">Rotate</text>
<path d="M805.5,50.6 L807.0,52.1 L808.5,50.6" fill="none" stroke="#d8d8d8" stroke-width="0.8"/>
</g>
<g id="size">
<rect fill="none" stroke="#d4d4d4" stroke-width="0.85" stroke-linecap="round" stroke-linejoin="round" x="832.6" y="24.4" width="4.4" height="9.6"/><path d="M829.4,25.2 V33.2" stroke="#3c9fe0" stroke-width="0.8"/><rect x="828.60" y="24.00" width="1.6" height="1.6" fill="#3c9fe0"/><rect x="828.60" y="32.80" width="1.6" height="1.6" fill="#3c9fe0"/>
<text x="838.60" y="32.25" font-size="7.4" fill="#ffffff" textLength="20.90" lengthAdjust="spacingAndGlyphs">Height:</text>
<rect fill="none" stroke="#d4d4d4" stroke-width="0.85" stroke-linecap="round" stroke-linejoin="round" x="828.4" y="42.2" width="8.8" height="4.2"/><path d="M829.2,49.6 H836.4" stroke="#3c9fe0" stroke-width="0.8"/><rect x="828.00" y="48.80" width="1.6" height="1.6" fill="#3c9fe0"/><rect x="836.00" y="48.80" width="1.6" height="1.6" fill="#3c9fe0"/>
<text x="838.60" y="49.45" font-size="7.4" fill="#ffffff" textLength="18.70" lengthAdjust="spacingAndGlyphs">Width:</text>
<rect x="862.6" y="22.6" width="37.8" height="12.8" rx="2.2" fill="none" stroke="#808080" stroke-width="0.8"/>
<text x="864.60" y="31.78" font-size="7.2" fill="#ffffff" textLength="21.60" lengthAdjust="spacingAndGlyphs">8.32 cm</text>
<path d="M894.0,27.1 L895.4,25.7 L896.8,27.1 M894.0,30.9 L895.4,32.3 L896.8,30.9" fill="none" stroke="#e4e4e4" stroke-width="0.85" stroke-linejoin="round"/>
<rect x="862.6" y="40.0" width="37.8" height="12.8" rx="2.2" fill="none" stroke="#808080" stroke-width="0.8"/>
<text x="864.60" y="49.18" font-size="7.2" fill="#ffffff" textLength="21.60" lengthAdjust="spacingAndGlyphs">5.31 cm</text>
<path d="M894.0,44.5 L895.4,43.1 L896.8,44.5 M894.0,48.3 L895.4,49.7 L896.8,48.3" fill="none" stroke="#e4e4e4" stroke-width="0.85" stroke-linejoin="round"/>
</g>
</g>
<g id="thumbnail-pane">
<rect x="145.95" y="70" width="1.25" height="444" fill="#747372"/>
<rect x="9.2" y="80.2" width="124.6" height="70.8" rx="1.6" fill="#ffffff"/>
<rect x="6.7" y="159.9" width="129.9" height="75.5" rx="3.9" fill="#262423" opacity="0.7"/><rect x="7.2" y="160.4" width="128.9" height="74.5" rx="3.4" fill="#de8a76"/>
<rect x="9.6" y="162.5" width="124.1" height="70.05" rx="1.9" fill="#ffffff"/>
<g transform="translate(-23.186,149.751) scale(0.16303)"><use href="#art"/></g>
<rect x="0" y="162.3" width="1.2" height="1.7" fill="#c4c4c4"/><rect x="0" y="166.6" width="1.2" height="0.9" fill="#c4c4c4"/>
</g>
<g id="slide-editor">
<rect x="201.1" y="78.2" width="761.2" height="429.1" fill="#ffffff"/>
<g clip-path="url(#slideClip)" stroke="#d7d7d7" stroke-width="1" fill="none">
<path d="M222.50,76.98 V507.3" stroke-dasharray="1 3.492"/>
<path d="M267.50,76.98 V507.3" stroke-dasharray="1 3.492"/>
<path d="M312.50,76.98 V507.3" stroke-dasharray="1 3.492"/>
<path d="M357.50,76.98 V507.3" stroke-dasharray="1 3.492"/>
<path d="M402.50,76.98 V507.3" stroke-dasharray="1 3.492"/>
<path d="M447.50,76.98 V507.3" stroke-dasharray="1 3.492"/>
<path d="M492.50,76.98 V507.3" stroke-dasharray="1 3.492"/>
<path d="M536.50,76.98 V507.3" stroke-dasharray="1 3.492"/>
<path d="M581.50,76.98 V507.3" stroke-dasharray="1 3.492"/>
<path d="M626.50,76.98 V507.3" stroke-dasharray="1 3.492"/>
<path d="M671.50,76.98 V507.3" stroke-dasharray="1 3.492"/>
<path d="M716.50,76.98 V507.3" stroke-dasharray="1 3.492"/>
<path d="M761.50,76.98 V507.3" stroke-dasharray="1 3.492"/>
<path d="M806.50,76.98 V507.3" stroke-dasharray="1 3.492"/>
<path d="M851.50,76.98 V507.3" stroke-dasharray="1 3.492"/>
<path d="M896.50,76.98 V507.3" stroke-dasharray="1 3.492"/>
<path d="M941.50,76.98 V507.3" stroke-dasharray="1 3.492"/>
<path d="M199.53,113.50 H962.3" stroke-dasharray="1 3.492"/>
<path d="M199.53,158.50 H962.3" stroke-dasharray="1 3.492"/>
<path d="M199.53,203.50 H962.3" stroke-dasharray="1 3.492"/>
<path d="M199.53,248.50 H962.3" stroke-dasharray="1 3.492"/>
<path d="M199.53,293.50 H962.3" stroke-dasharray="1 3.492"/>
<path d="M199.53,338.50 H962.3" stroke-dasharray="1 3.492"/>
<path d="M199.53,382.50 H962.3" stroke-dasharray="1 3.492"/>
<path d="M199.53,427.50 H962.3" stroke-dasharray="1 3.492"/>
<path d="M199.53,472.50 H962.3" stroke-dasharray="1 3.492"/>
</g>
<use href="#art"/>
<rect x="384.7" y="213.9" width="120.2" height="187.6" fill="none" stroke="#8c8c8c" stroke-width="0.9"/>
<circle cx="384.7" cy="213.9" r="2.7" fill="#ffffff" stroke="#5f5f5f" stroke-width="0.9"/>
<circle cx="444.8" cy="213.9" r="2.7" fill="#ffffff" stroke="#5f5f5f" stroke-width="0.9"/>
<circle cx="504.9" cy="213.9" r="2.7" fill="#ffffff" stroke="#5f5f5f" stroke-width="0.9"/>
<circle cx="384.7" cy="307.7" r="2.7" fill="#ffffff" stroke="#5f5f5f" stroke-width="0.9"/>
<circle cx="504.9" cy="307.7" r="2.7" fill="#ffffff" stroke="#5f5f5f" stroke-width="0.9"/>
<circle cx="384.7" cy="401.5" r="2.7" fill="#ffffff" stroke="#5f5f5f" stroke-width="0.9"/>
<circle cx="444.8" cy="401.5" r="2.7" fill="#ffffff" stroke="#5f5f5f" stroke-width="0.9"/>
<circle cx="504.9" cy="401.5" r="2.7" fill="#ffffff" stroke="#5f5f5f" stroke-width="0.9"/>
</g>
<g id="vscroll">
<path d="M1015.1,483 V73.4 Q1015.1,70.2 1018.3,70.2 H1024 V486.4 H1018.5 Q1015.1,486.4 1015.1,483 Z" fill="#3d3d3c"/>
<path d="M1016.9,76.4 L1019.5,73.0 L1022.1,76.4 Z" fill="#d9d9d9"/>
<rect x="1017.4" y="279.6" width="4.4" height="199.4" rx="2.2" fill="#b4b4b4"/>
<path d="M1017.3,481.6 L1021.9,481.6 L1019.6,485 Z" fill="#d0d0d0"/>
<path d="M1017.4,491.6 L1019.6,488.8 L1021.8,491.6 Z M1017.4,494.6 L1019.6,491.8 L1021.8,494.6 Z" fill="#d0d0d0"/>
<path d="M1017.4,498.4 L1019.6,501.2 L1021.8,498.4 Z M1017.4,501.4 L1019.6,504.2 L1021.8,501.4 Z" fill="#d0d0d0"/>
</g>
<g id="fill-menu">
<rect x="375.6" y="32.1" width="92.4" height="197.0" rx="3" fill="#4c4c4c" stroke="#747474" stroke-width="0.9" filter="url(#sh)"/>
<text x="383.20" y="43.25" font-size="7.4" fill="#ffffff" font-weight="bold" textLength="40.40" lengthAdjust="spacingAndGlyphs">Theme Colors</text>
<rect x="377.10" y="49.1" width="6.9" height="6.9" fill="#ffffff" stroke="#b4b4b4" stroke-width="0.7"/>
<rect x="386.22" y="49.1" width="6.9" height="6.9" fill="#000000" stroke="#b4b4b4" stroke-width="0.7"/>
<rect x="395.34" y="49.1" width="6.9" height="6.9" fill="#e7e6e6" stroke="#b4b4b4" stroke-width="0.7"/>
<rect x="404.46" y="49.1" width="6.9" height="6.9" fill="#44546a" stroke="#b4b4b4" stroke-width="0.7"/>
<rect x="413.58" y="49.1" width="6.9" height="6.9" fill="#4472c4" stroke="#b4b4b4" stroke-width="0.7"/>
<rect x="422.70" y="49.1" width="6.9" height="6.9" fill="#ed7d31" stroke="#b4b4b4" stroke-width="0.7"/>
<rect x="431.82" y="49.1" width="6.9" height="6.9" fill="#a5a5a5" stroke="#b4b4b4" stroke-width="0.7"/>
<rect x="440.94" y="49.1" width="6.9" height="6.9" fill="#ffc000" stroke="#b4b4b4" stroke-width="0.7"/>
<rect x="450.06" y="49.1" width="6.9" height="6.9" fill="#5b9bd5" stroke="#b4b4b4" stroke-width="0.7"/>
<rect x="459.18" y="49.1" width="6.9" height="6.9" fill="#70ad47" stroke="#b4b4b4" stroke-width="0.7"/>
<rect x="377.10" y="62.80" width="6.9" height="7.05" fill="#f2f2f2"/>
<rect x="377.10" y="69.80" width="6.9" height="7.05" fill="#d9d9d9"/>
<rect x="377.10" y="76.80" width="6.9" height="7.05" fill="#bfbfbf"/>
<rect x="377.10" y="83.80" width="6.9" height="7.05" fill="#a6a6a6"/>
<rect x="377.10" y="90.80" width="6.9" height="7.05" fill="#7f7f7f"/>
<rect x="377.10" y="62.8" width="6.9" height="35" fill="none" stroke="#b4b4b4" stroke-width="0.7"/>
<rect x="386.22" y="62.80" width="6.9" height="7.05" fill="#7f7f7f"/>
<rect x="386.22" y="69.80" width="6.9" height="7.05" fill="#595959"/>
<rect x="386.22" y="76.80" width="6.9" height="7.05" fill="#404040"/>
<rect x="386.22" y="83.80" width="6.9" height="7.05" fill="#262626"/>
<rect x="386.22" y="90.80" width="6.9" height="7.05" fill="#0d0d0d"/>
<rect x="386.22" y="62.8" width="6.9" height="35" fill="none" stroke="#b4b4b4" stroke-width="0.7"/>
<rect x="395.34" y="62.80" width="6.9" height="7.05" fill="#d0cece"/>
<rect x="395.34" y="69.80" width="6.9" height="7.05" fill="#aeaaaa"/>
<rect x="395.34" y="76.80" width="6.9" height="7.05" fill="#757171"/>
<rect x="395.34" y="83.80" width="6.9" height="7.05" fill="#3a3838"/>
<rect x="395.34" y="90.80" width="6.9" height="7.05" fill="#161616"/>
<rect x="395.34" y="62.8" width="6.9" height="35" fill="none" stroke="#b4b4b4" stroke-width="0.7"/>
<rect x="404.46" y="62.80" width="6.9" height="7.05" fill="#d6dce5"/>
<rect x="404.46" y="69.80" width="6.9" height="7.05" fill="#adb9ca"/>
<rect x="404.46" y="76.80" width="6.9" height="7.05" fill="#8497b0"/>
<rect x="404.46" y="83.80" width="6.9" height="7.05" fill="#333f50"/>
<rect x="404.46" y="90.80" width="6.9" height="7.05" fill="#222a35"/>
<rect x="404.46" y="62.8" width="6.9" height="35" fill="none" stroke="#b4b4b4" stroke-width="0.7"/>
<rect x="413.58" y="62.80" width="6.9" height="7.05" fill="#dae3f3"/>
<rect x="413.58" y="69.80" width="6.9" height="7.05" fill="#b4c7e7"/>
<rect x="413.58" y="76.80" width="6.9" height="7.05" fill="#8faadc"/>
<rect x="413.58" y="83.80" width="6.9" height="7.05" fill="#2f5597"/>
<rect x="413.58" y="90.80" width="6.9" height="7.05" fill="#203864"/>
<rect x="413.58" y="62.8" width="6.9" height="35" fill="none" stroke="#b4b4b4" stroke-width="0.7"/>
<rect x="422.70" y="62.80" width="6.9" height="7.05" fill="#fbe5d6"/>
<rect x="422.70" y="69.80" width="6.9" height="7.05" fill="#f8cbad"/>
<rect x="422.70" y="76.80" width="6.9" height="7.05" fill="#f4b183"/>
<rect x="422.70" y="83.80" width="6.9" height="7.05" fill="#c55a11"/>
<rect x="422.70" y="90.80" width="6.9" height="7.05" fill="#843c0c"/>
<rect x="422.70" y="62.8" width="6.9" height="35" fill="none" stroke="#b4b4b4" stroke-width="0.7"/>
<rect x="431.82" y="62.80" width="6.9" height="7.05" fill="#ededed"/>
<rect x="431.82" y="69.80" width="6.9" height="7.05" fill="#dbdbdb"/>
<rect x="431.82" y="76.80" width="6.9" height="7.05" fill="#c9c9c9"/>
<rect x="431.82" y="83.80" width="6.9" height="7.05" fill="#7c7c7c"/>
<rect x="431.82" y="90.80" width="6.9" height="7.05" fill="#525252"/>
<rect x="431.82" y="62.8" width="6.9" height="35" fill="none" stroke="#b4b4b4" stroke-width="0.7"/>
<rect x="440.94" y="62.80" width="6.9" height="7.05" fill="#fff2cc"/>
<rect x="440.94" y="69.80" width="6.9" height="7.05" fill="#ffe699"/>
<rect x="440.94" y="76.80" width="6.9" height="7.05" fill="#ffd966"/>
<rect x="440.94" y="83.80" width="6.9" height="7.05" fill="#bf9000"/>
<rect x="440.94" y="90.80" width="6.9" height="7.05" fill="#7f6000"/>
<rect x="440.94" y="62.8" width="6.9" height="35" fill="none" stroke="#b4b4b4" stroke-width="0.7"/>
<rect x="450.06" y="62.80" width="6.9" height="7.05" fill="#deebf7"/>
<rect x="450.06" y="69.80" width="6.9" height="7.05" fill="#bdd7ee"/>
<rect x="450.06" y="76.80" width="6.9" height="7.05" fill="#9dc3e6"/>
<rect x="450.06" y="83.80" width="6.9" height="7.05" fill="#2e75b6"/>
<rect x="450.06" y="90.80" width="6.9" height="7.05" fill="#1f4e79"/>
<rect x="450.06" y="62.8" width="6.9" height="35" fill="none" stroke="#b4b4b4" stroke-width="0.7"/>
<rect x="459.18" y="62.80" width="6.9" height="7.05" fill="#e2f0d9"/>
<rect x="459.18" y="69.80" width="6.9" height="7.05" fill="#c5e0b4"/>
<rect x="459.18" y="76.80" width="6.9" height="7.05" fill="#a9d18e"/>
<rect x="459.18" y="83.80" width="6.9" height="7.05" fill="#548235"/>
<rect x="459.18" y="90.80" width="6.9" height="7.05" fill="#385723"/>
<rect x="459.18" y="62.8" width="6.9" height="35" fill="none" stroke="#b4b4b4" stroke-width="0.7"/>
<rect x="376.2" y="104.1" width="91.2" height="0.8" fill="#707070"/>
<text x="383.20" y="116.15" font-size="7.4" fill="#ffffff" font-weight="bold" textLength="46.50" lengthAdjust="spacingAndGlyphs">Standard Colors</text>
<rect x="377.10" y="122.2" width="6.9" height="6.9" fill="#c00000" stroke="#b4b4b4" stroke-width="0.7"/>
<rect x="386.22" y="122.2" width="6.9" height="6.9" fill="#ff0000" stroke="#b4b4b4" stroke-width="0.7"/>
<rect x="395.34" y="122.2" width="6.9" height="6.9" fill="#ffc000" stroke="#b4b4b4" stroke-width="0.7"/>
<rect x="404.46" y="122.2" width="6.9" height="6.9" fill="#ffff00" stroke="#b4b4b4" stroke-width="0.7"/>
<rect x="413.58" y="122.2" width="6.9" height="6.9" fill="#92d050" stroke="#b4b4b4" stroke-width="0.7"/>
<rect x="422.70" y="122.2" width="6.9" height="6.9" fill="#00b050" stroke="#b4b4b4" stroke-width="0.7"/>
<rect x="431.82" y="122.2" width="6.9" height="6.9" fill="#00b0f0" stroke="#b4b4b4" stroke-width="0.7"/>
<rect x="440.94" y="122.2" width="6.9" height="6.9" fill="#0070c0" stroke="#b4b4b4" stroke-width="0.7"/>
<rect x="450.06" y="122.2" width="6.9" height="6.9" fill="#002060" stroke="#b4b4b4" stroke-width="0.7"/>
<rect x="459.18" y="122.2" width="6.9" height="6.9" fill="#7030a0" stroke="#b4b4b4" stroke-width="0.7"/>
<rect x="376.2" y="135.3" width="91.2" height="0.8" fill="#707070"/>
<rect x="382.2" y="139.6" width="8.6" height="8.6" fill="none" stroke="#d8d8d8" stroke-width="0.8"/>
<text x="395.70" y="145.85" font-size="7.4" fill="#ffffff" textLength="18.20" lengthAdjust="spacingAndGlyphs">No Fill</text>
<rect x="395.7" y="146.6" width="4.6" height="0.6" fill="#ffffff"/>
<rect x="376.2" y="151.5" width="91.2" height="0.8" fill="#707070"/>
<path d="M386.4,156 C383.6,156 381.8,158 381.8,160.4 C381.8,163.2 384,164.8 386.2,164.8 C387.6,164.8 387.8,163.8 387.2,163 C386.6,162.2 387,161.2 388.2,161.2 L389.6,161.2 C390.6,161.2 391,160.4 391,159.6 C391,157.6 389,156 386.4,156 Z" fill="none" stroke="#d8d8d8" stroke-width="0.8"/>
<circle cx="384.2" cy="159.2" r="0.8" fill="#e04a3f"/><circle cx="386.6" cy="158" r="0.8" fill="#f2c94c"/><circle cx="388.9" cy="159.2" r="0.8" fill="#4fa3e0"/><circle cx="384.3" cy="162" r="0.8" fill="#6fcf6f"/>
<text x="395.70" y="163.15" font-size="7.4" fill="#ffffff" textLength="49.60" lengthAdjust="spacingAndGlyphs">More Fill Colors...</text>
<rect x="395.7" y="163.9" width="5.6" height="0.6" fill="#ffffff"/>
<path d="M382.4,180.2 L382.8,178.2 L387.2,173.8 L388.6,175.2 L384.2,179.6 Z M386.6,173 L389.4,175.8 M387.6,173.6 L389.2,172 C389.8,171.4 390.8,172.4 390.2,173 L388.8,174.8" fill="none" stroke="#d8d8d8" stroke-width="0.8" stroke-linejoin="round"/>
<text x="395.70" y="178.35" font-size="7.4" fill="#ffffff" textLength="32.40" lengthAdjust="spacingAndGlyphs">Eyedropper</text>
<rect x="395.7" y="179.1" width="3.8" height="0.6" fill="#ffffff"/>
<rect x="382.2" y="187.2" width="8.8" height="7.2" fill="#2e6fb0" stroke="#d8d8d8" stroke-width="0.7"/>
<path d="M382.6,193.8 L385.4,190.4 L387.4,192.4 L388.6,191.4 L390.6,193.8 Z" fill="#7ab8ef"/><circle cx="388.8" cy="189.2" r="0.7" fill="#ffd24a"/>
<text x="395.70" y="192.85" font-size="7.4" fill="#ffffff" textLength="24.50" lengthAdjust="spacingAndGlyphs">Picture...</text>
<rect x="395.7" y="193.6" width="3.8" height="0.6" fill="#ffffff"/>
<linearGradient id="gr1" x1="0" y1="0" x2="1" y2="1"><stop offset="0" stop-color="#2c2c2c"/><stop offset="1" stop-color="#d0d0d0"/></linearGradient>
<rect x="382.2" y="201.4" width="8.6" height="8.6" fill="url(#gr1)" stroke="#d8d8d8" stroke-width="0.7"/>
<text x="395.70" y="208.25" font-size="7.4" fill="#ffffff" textLength="23.90" lengthAdjust="spacingAndGlyphs">Gradient</text>
<rect x="395.7" y="209.0" width="4.6" height="0.6" fill="#ffffff"/>
<path d="M460.6,203.2 L462.8,205.6 L460.6,208" fill="none" stroke="#d0d0d0" stroke-width="0.9"/>
<rect x="382.2" y="216.4" width="8.6" height="8.6" fill="#25507c" stroke="#d8d8d8" stroke-width="0.7"/>
<path d="M382.6,224.6 L390.4,216.8 L390.4,224.6 Z" fill="#3a86cf"/><path d="M384,223.6 L386,221.6 M386.8,223.8 L389.4,221.2" stroke="#1c4c80" stroke-width="0.7"/>
<text x="395.70" y="223.45" font-size="7.4" fill="#ffffff" textLength="21.30" lengthAdjust="spacingAndGlyphs">Texture</text>
<rect x="395.7" y="224.2" width="3.6" height="0.6" fill="#ffffff"/>
<path d="M460.6,218.4 L462.8,220.8 L460.6,223.2" fill="none" stroke="#d0d0d0" stroke-width="0.9"/>
</g>
</svg>
</body></html>
